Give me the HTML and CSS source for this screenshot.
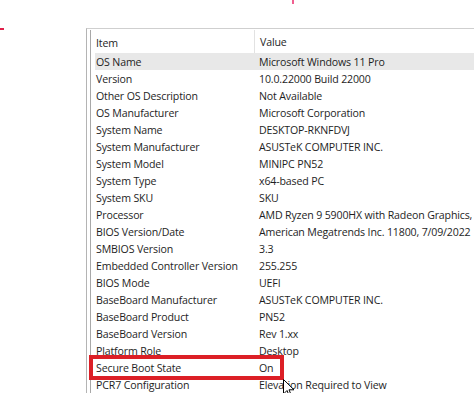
FILE: index.html
```html
<!DOCTYPE html>
<html>
<head>
<meta charset="utf-8">
<link rel="stylesheet" href="styles.css">
</head>
<body>
<div class="mark mark-left"></div>
<div class="mark mark-top"></div>
<div class="frame">
  <div class="list">
    <div class="head">
      <div class="c1">Item</div>
      <div class="c2">Value</div>
    </div>
    <div class="row sel"><div class="c1">OS Name</div><div class="c2">Microsoft Windows 11 Pro</div></div>
    <div class="row"><div class="c1">Version</div><div class="c2">10.0.22000 Build 22000</div></div>
    <div class="row"><div class="c1">Other OS Description</div><div class="c2">Not Available</div></div>
    <div class="row"><div class="c1">OS Manufacturer</div><div class="c2">Microsoft Corporation</div></div>
    <div class="row"><div class="c1">System Name</div><div class="c2">DESKTOP-RKNFDVJ</div></div>
    <div class="row"><div class="c1">System Manufacturer</div><div class="c2">ASUSTeK COMPUTER INC.</div></div>
    <div class="row"><div class="c1">System Model</div><div class="c2">MINIPC PN52</div></div>
    <div class="row"><div class="c1">System Type</div><div class="c2">x64-based PC</div></div>
    <div class="row"><div class="c1">System SKU</div><div class="c2">SKU</div></div>
    <div class="row"><div class="c1">Processor</div><div class="c2">AMD Ryzen 9 5900HX with Radeon Graphics,</div></div>
    <div class="row"><div class="c1">BIOS Version/Date</div><div class="c2">American Megatrends Inc. 11800, 7/09/2022</div></div>
    <div class="row"><div class="c1">SMBIOS Version</div><div class="c2">3.3</div></div>
    <div class="row"><div class="c1">Embedded Controller Version</div><div class="c2">255.255</div></div>
    <div class="row"><div class="c1">BIOS Mode</div><div class="c2">UEFI</div></div>
    <div class="row"><div class="c1">BaseBoard Manufacturer</div><div class="c2">ASUSTeK COMPUTER INC.</div></div>
    <div class="row"><div class="c1">BaseBoard Product</div><div class="c2">PN52</div></div>
    <div class="row"><div class="c1">BaseBoard Version</div><div class="c2">Rev 1.xx</div></div>
    <div class="row"><div class="c1">Platform Role</div><div class="c2">Desktop</div></div>
    <div class="row boxed"><div class="c1">Secure Boot State</div><div class="c2">On</div><div class="redbox"></div></div>
    <div class="row cursor-row"><div class="c1">PCR7 Configuration</div><div class="c2">Elevation Required to View</div>
      <svg class="cursor" width="12" height="19" viewBox="0 0 12 19"><path d="M0.5 0.5 L0.5 15 L4 11.5 L6.5 17.5 L8.5 16.6 L6 10.8 L11 10.8 Z" fill="#fff" stroke="#000" stroke-width="1"/></svg>
    </div>
  </div>
</div>
</body>
</html>
```
FILE: styles.css
```css
html, body {
  margin: 0;
  padding: 0;
  background: #fff;
  overflow: hidden;
}
body {
  width: 474px;
  height: 393px;
  position: relative;
  font-family: "Open Sans", "Noto Sans", sans-serif;
  font-size: 10.6px;
  letter-spacing: -0.15px;
  color: #1e1e1e;
}
.mark {
  position: absolute;
  background: #e0204a;
}
.mark-left {
  left: 0;
  top: 28px;
  width: 4px;
  height: 2px;
}
.mark-top {
  left: 292px;
  top: 0;
  width: 2px;
  height: 4px;
  background: #f06090;
}
.frame {
  margin-left: 86px;
  margin-top: 28px;
  border-left: 1px solid #b4b4b4;
  border-top: 1px solid #cfcfcf;
  padding-left: 3px;
  padding-top: 1px;
  width: 385px;
}
.list {
  border-left: 1px solid #a8a8a8;
}
.head {
  display: flex;
  height: 23px;
  align-items: center;
}
.head .c1 {
  border-right: 1px solid #e2e2e2;
  height: 23px;
  line-height: 26px;
}
.head .c2 {
  line-height: 26px;
}
.c1 {
  width: 158px;
  padding-left: 5px;
  flex: none;
  white-space: nowrap;
}
.c2 {
  padding-left: 5px;
  white-space: nowrap;
}
.row {
  display: flex;
  height: 17px;
  line-height: 18px;
  margin-left: 4px;
  position: relative;
}
.row .c1 {
  width: 158px;
  padding-left: 1px;
}
.row .c2 {
  padding-left: 5px;
}
.sel {
  background: #e8e8e8;
}
.redbox {
  position: absolute;
  left: -6px;
  top: -4px;
  width: 187px;
  height: 17px;
  border: 4px solid #dc1f26;
}
.cursor {
  position: absolute;
  left: 188px;
  top: 3px;
}
```
